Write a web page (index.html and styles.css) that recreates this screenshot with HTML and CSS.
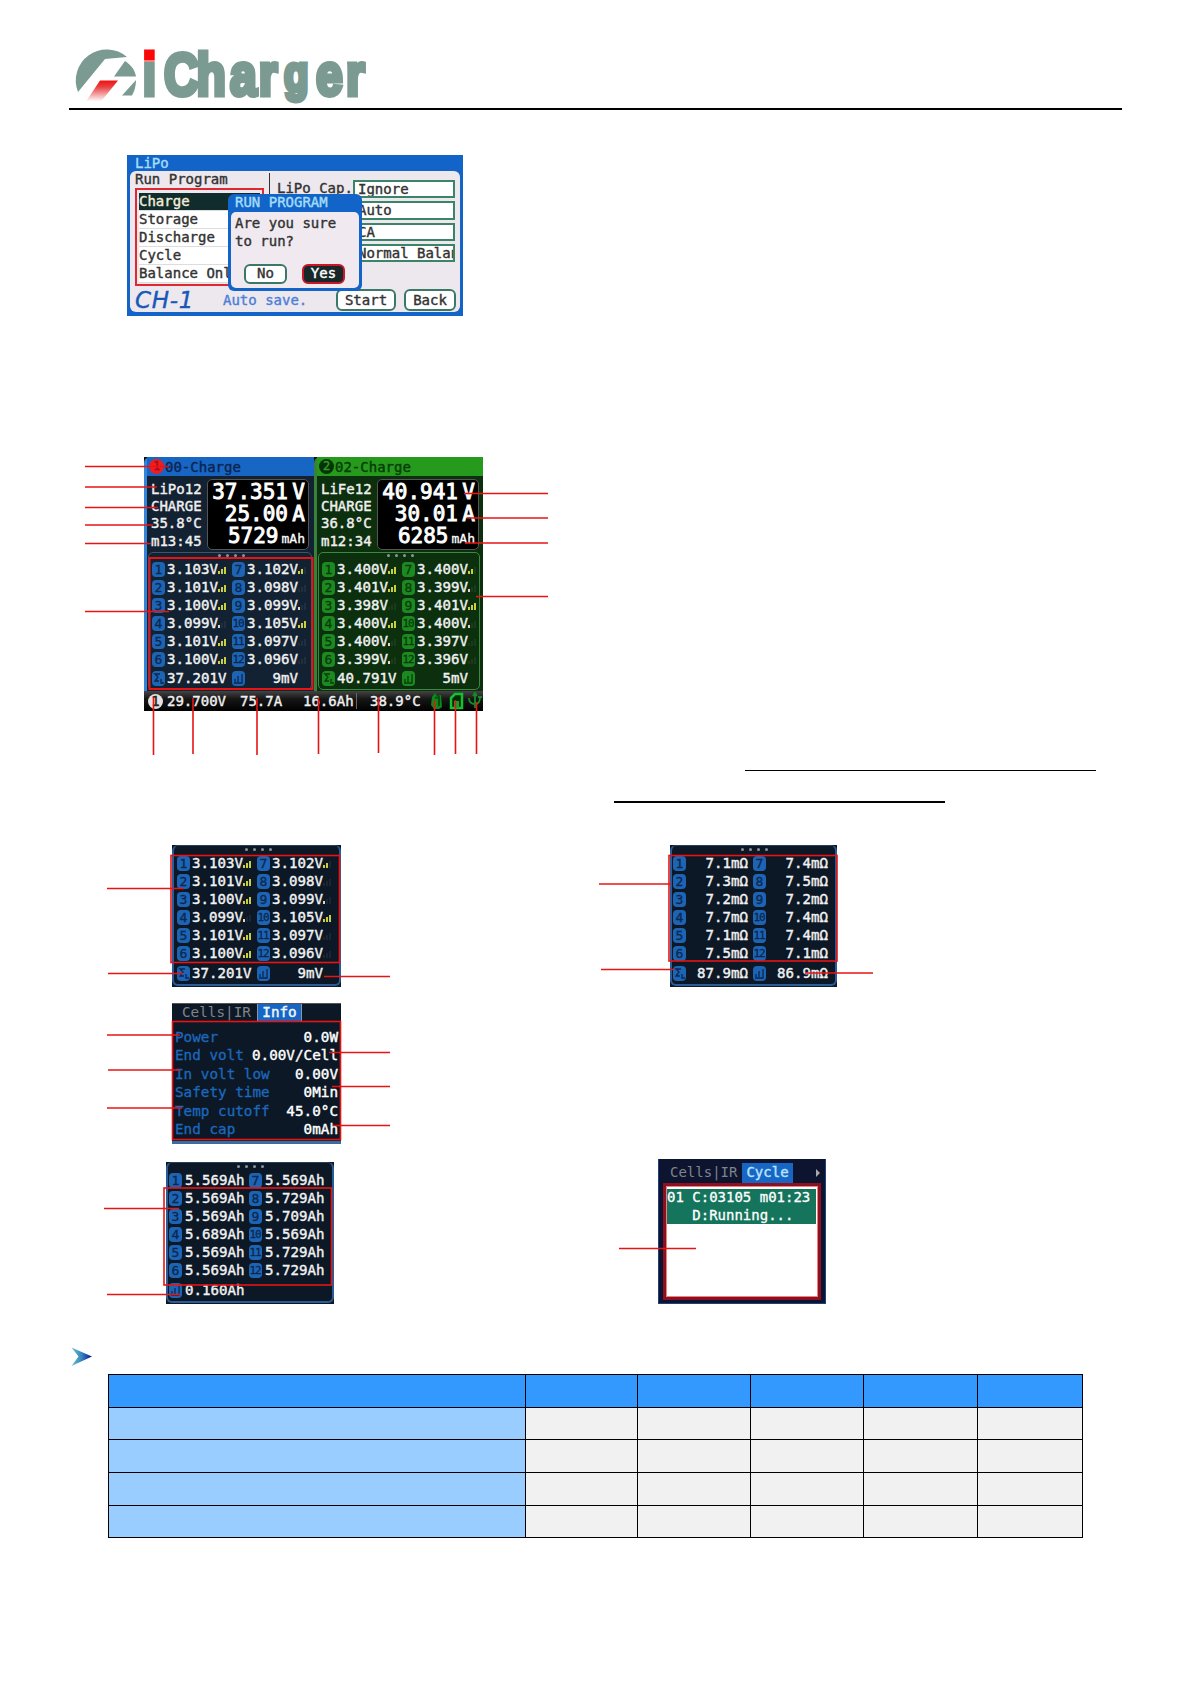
FILE: index.html
```
<!DOCTYPE html>
<html lang="en">
<head>
    <meta charset="UTF-8">
    <meta name="viewport" content="width=device-width, initial-scale=1.0">
    <title>iCharger Manual</title>
    <link rel="stylesheet" href="styles.css">
</head>
<body>
    <header class="page-header">
        <svg class="logo" width="300" height="58" viewBox="70 48 300 58">
            <defs>
                <linearGradient id="fade" x1="0" y1="0" x2="0" y2="1">
                    <stop offset="0" stop-color="#f01010"/>
                    <stop offset="0.3" stop-color="#e84040"/>
                    <stop offset="1" stop-color="#fff"/>
                </linearGradient>
                <linearGradient id="dot" gradientUnits="userSpaceOnUse" x1="0" y1="50" x2="0" y2="98">
                    <stop offset="0.24" stop-color="#f80808"/>
                    <stop offset="0.24" stop-color="#7b9a92"/>
                </linearGradient>
            </defs>
            <path d="M78 92A31 31 0 0 1 127 57L105 59Z" fill="#7b9a92"/>
            <path d="M125 61L114 76.500H136C135 70 131 65 125 61Z" fill="#7b9a92"/>
            <path d="M136 80L122 95.500H132C135 90 136 85 136 80Z" fill="#7b9a92"/>
            <path d="M100 80.500H118L101 101.500H86Z" fill="url(#fade)"/>
            <g class="logo-text" transform="scale(0.8 1)">
                <text x="178.500" y="95" fill="url(#dot)" stroke="url(#dot)">i</text>
                <text x="205 245.500 287.500 323.500" y="95">Char</text>
                <text class="logo-g" x="355" y="91">g</text>
                <text x="395 432.500" y="95">er</text>
            </g>
        </svg>
    </header>

    <main>
        <!-- run program confirmation -->
        <section class="screen run-screen">
            <div class="run-title">LiPo</div>
            <div class="run-body">
                <div class="run-columns">
                    <div class="program">
                        <div class="program-title">Run Program</div>
                        <ul class="program-list">
                            <li class="active">Charge</li>
                            <li>Storage</li>
                            <li>Discharge</li>
                            <li>Cycle</li>
                            <li>Balance Only</li>
                        </ul>
                    </div>
                    <div class="cap-label">LiPo Cap.</div>
                    <div class="fields">
                        <div class="field">Ignore</div>
                        <div class="field">Auto</div>
                        <div class="field">CA</div>
                        <div class="field">Normal Balan</div>
                    </div>
                </div>
                <div class="run-footer">
                    <span class="channel">CH-1</span>
                    <span class="autosave">Auto save.</span>
                    <span class="btn btn-start">Start</span>
                    <span class="btn btn-back">Back</span>
                </div>
            </div>
            <div class="dialog">
                <div class="dialog-title">RUN PROGRAM</div>
                <div class="dialog-body">
                    <div class="dialog-text">Are you sure<br>to run?</div>
                    <div class="dialog-buttons">
                        <span class="btn btn-no">No</span>
                        <span class="btn btn-yes">Yes</span>
                    </div>
                </div>
            </div>
        </section>

        <!-- dual channel screen -->
        <section class="screen dual-screen">
            <div class="channels">
                <div class="panel blue">
                    <div class="panel-head"><span class="num">1</span>00-Charge</div>
                    <div class="panel-top">
                        <div class="status">LiPo12<br>CHARGE<br>35.8°C<br>m13:45</div>
                        <div class="readout">
                            <div>37.351<b>V</b></div>
                            <div>25.00<b>A</b></div>
                            <div>5729<small>mAh</small></div>
                        </div>
                    </div>
                    <div class="cells framed" data-cells="volts"></div>
                </div>
                <div class="panel green">
                    <div class="panel-head"><span class="num">2</span>02-Charge</div>
                    <div class="panel-top">
                        <div class="status">LiFe12<br>CHARGE<br>36.8°C<br>m12:34</div>
                        <div class="readout">
                            <div>40.941<b>V</b></div>
                            <div>30.01<b>A</b></div>
                            <div>6285<small>mAh</small></div>
                        </div>
                    </div>
                    <div class="cells" data-cells="life"></div>
                </div>
            </div>
            <div class="input-bar">
                <span class="input-num">1</span>
                <span class="input-volt">29.700V</span>
                <span class="input-amp">75.7A</span>
                <span class="input-cap">16.6Ah</span>
                <span class="input-temp">38.9°C</span>
                <svg class="input-icons" width="54" height="18" viewBox="0 0 54 18">
                    <path d="M3 5L6 1L8 4L12 3L13 15L10 17H5L2 13Z" fill="#0b8a1c"/>
                    <path d="M6 6L10 5V14" fill="none" stroke="#04500c" stroke-width="2"/>
                    <path d="M22 6L26 2H33V16H22Z" fill="#032a06" stroke="#14c030" stroke-width="2.500"/>
                    <path d="M25 16V9H30V16" fill="#14a028"/>
                    <path d="M46 2V16M40 6C40 11 43 12 46 12C49 12 51 10 51 5M44 4L46 1L48 4M49 5H53" fill="none" stroke="#128c26" stroke-width="1.800"/>
                </svg>
            </div>
        </section>

        <div class="underlines">
            <div class="underline first"></div>
            <div class="underline second"></div>
        </div>

        <div class="screen-row cells-row">
            <section class="screen cells-screen blue">
                <div class="cells" data-cells="volts"></div>
            </section>
            <section class="screen cells-screen resistance blue">
                <div class="cells" data-cells="ohms"></div>
            </section>
        </div>

        <section class="screen info-screen">
            <div class="tabs"><span class="tab">Cells|IR</span><span class="tab selected">Info</span></div>
            <dl class="info-list">
                <div><dt>Power</dt><dd>0.0W</dd></div>
                <div><dt>End volt</dt><dd>0.00V/Cell</dd></div>
                <div><dt>In volt low</dt><dd>0.00V</dd></div>
                <div><dt>Safety time</dt><dd>0Min</dd></div>
                <div><dt>Temp cutoff</dt><dd>45.0°C</dd></div>
                <div><dt>End cap</dt><dd>0mAh</dd></div>
            </dl>
        </section>

        <div class="screen-row cycle-row">
            <section class="screen cells-screen capacity blue">
                <div class="cells" data-cells="caps"></div>
            </section>
            <section class="screen cycle-screen">
                <div class="tabs"><span class="tab">Cells|IR</span><span class="tab selected">Cycle</span><span class="more"></span></div>
                <div class="cycle-list">
                    <div class="cycle-item">01 C:03105 m01:23<br>   D:Running...</div>
                </div>
            </section>
        </div>

        <svg class="bullet" width="22" height="20" viewBox="0 0 22 20">
            <defs>
                <linearGradient id="arrow">
                    <stop offset="0" stop-color="#6cc4cc"/>
                    <stop offset="0.5" stop-color="#3484c0"/>
                    <stop offset="1" stop-color="#08108c"/>
                </linearGradient>
            </defs>
            <path d="M0.500 0.500L21 9.500L0.500 19L7.500 9.500Z" fill="url(#arrow)"/>
        </svg>

        <table class="spec">
            <colgroup><col class="c1"><col class="c2"><col class="c3"><col class="c4"><col class="c5"><col class="c6"></colgroup>
            <thead>
                <tr><th></th><th></th><th></th><th></th><th></th><th></th></tr>
            </thead>
            <tbody>
                <tr class="short"><td></td><td></td><td></td><td></td><td></td><td></td></tr>
                <tr><td></td><td></td><td></td><td></td><td></td><td></td></tr>
                <tr><td></td><td></td><td></td><td></td><td></td><td></td></tr>
                <tr class="short"><td></td><td></td><td></td><td></td><td></td><td></td></tr>
            </tbody>
        </table>
    </main>

    <!-- callout lines and frames over the screens -->
    <svg class="callouts" width="1191" height="1684" viewBox="0 0 1191 1684">
        <path d="M85 466.500H169M85 487H157M85 507.500H158M85 525H153M85 543.500H151M85 611.500H169"/>
        <path d="M464 493.500H548M467 518H548M465 543H548M476 596.500H548"/>
        <path d="M153.500 697V755M193 698V754M257 698V755M318.500 698V754M378.500 697V753M434.500 700V755M455.500 700V754M476.500 702V754"/>
        <path d="M107 888.500H184M108 973.500H183M324 976.500H390"/>
        <path d="M599 884H671M601 969.500H674M805 973H873"/>
        <path d="M107 1035H180M108 1070H180M107 1108H182M329 1052.500H390M332 1086.500H390M333 1125.500H390"/>
        <path d="M104 1208.500H179M107 1294.500H180M619 1248.500H696"/>
        <rect x="149.500" y="558" width="163" height="131" stroke-width="2"/>
        <rect x="171" y="855.500" width="168.500" height="107"/>
        <rect x="669" y="855.500" width="168" height="105.500"/>
        <rect x="172.500" y="1021.500" width="168" height="118"/>
        <rect x="164" y="1188" width="167.500" height="97"/>
    </svg>

    <script>
        // value, signal level (1-3, 0 = off)
        var data = {
            volts: {
                cells: [['3.103V', 3], ['3.102V', 2], ['3.101V', 3], ['3.098V', 0], ['3.100V', 3], ['3.099V', 1],
                        ['3.099V', 1], ['3.105V', 3], ['3.101V', 3], ['3.097V', 0], ['3.100V', 3], ['3.096V', 0]],
                total: ['37.201V', '9mV']
            },
            life: {
                cells: [['3.400V', 3], ['3.400V', 2], ['3.401V', 3], ['3.399V', 1], ['3.398V', 0], ['3.401V', 3],
                        ['3.400V', 3], ['3.400V', 1], ['3.400V', 1], ['3.397V', 0], ['3.399V', 1], ['3.396V', 0]],
                total: ['40.791V', '5mV']
            },
            ohms: {
                cells: [['7.1mΩ'], ['7.4mΩ'], ['7.3mΩ'], ['7.5mΩ'], ['7.2mΩ'], ['7.2mΩ'],
                        ['7.7mΩ'], ['7.4mΩ'], ['7.1mΩ'], ['7.4mΩ'], ['7.5mΩ'], ['7.1mΩ']],
                total: ['87.9mΩ', '86.9mΩ']
            },
            caps: {
                cells: [['5.569Ah'], ['5.569Ah'], ['5.569Ah'], ['5.729Ah'], ['5.569Ah'], ['5.709Ah'],
                        ['5.689Ah'], ['5.569Ah'], ['5.569Ah'], ['5.729Ah'], ['5.569Ah'], ['5.729Ah']],
                total: ['0.160Ah']
            }
        };

        function bars(level) {
            if (level === undefined) return '';
            var out = '<svg class="bars" width="9" height="9">';
            for (var i = 0; i < 3; i++) {
                var h = 3 + i * 2;
                var cls = i < level ? (level > 1 ? 'on' : 'low') : 'off';
                out += '<rect class="' + cls + '" x="' + i * 3 + '" y="' + (9 - h) + '" width="2" height="' + h + '"/>';
            }
            return out + '</svg>';
        }

        document.querySelectorAll('[data-cells]').forEach(function(el) {
            var d = data[el.dataset.cells];
            var html = '<div class="dots"><i></i><i></i><i></i><i></i></div><div class="cell-grid">';
            d.cells.forEach(function(c, i) {
                var n = i % 2 ? i / 2 + 6.5 : i / 2 + 1;
                html += '<span class="badge' + (n > 9 ? ' wide' : '') + '">' + n + '</span>';
                html += '<span class="value">' + c[0] + bars(c[1]) + '</span>';
            });
            html += '</div><div class="cell-grid total">';
            d.total.forEach(function(t, i) {
                var mark = i || d.total.length === 1 ? '<path d="M3 11V8M6 11V5M10 3V12H2"/>' : '<path d="M8 3H3L6 6L3 10H7M9 8V12H12"/>';
                html += '<svg class="badge" width="13" height="15">' + mark + '</svg><span class="value">' + t + '</span>';
            });
            el.innerHTML = html + '</div>';
        });
    </script>
</body>
</html>
```
FILE: styles.css
```
* {
    box-sizing: border-box;
}
body {
    position: relative;
    width: 1191px;
    height: 1684px;
    margin: 0;
    background: #fff;
    font-family: "DejaVu Sans Mono", "Liberation Mono", monospace;
    overflow: hidden;
}
main {
    display: flex;
    flex-direction: column;
    align-items: flex-start;
}
.page-header {
    height: 110px;
    margin: 0 69px 45px;
    padding: 48px 0 0 1px;
    border-bottom: 2px solid #000;
}
.logo {
    display: block;
    overflow: visible;
}
.logo-text {
    font-family: "Liberation Sans", Arial, sans-serif;
    font-weight: bold;
    font-size: 60px;
    fill: #7b9a92;
    stroke: #7b9a92;
    stroke-width: 5px;
}
.logo-g {
    font-size: 50px;
}
.screen {
    font-size: 14px;
    line-height: 18px;
    white-space: nowrap;
    overflow: hidden;
}

/* run program */
.run-screen {
    position: relative;
    width: 336px;
    height: 161px;
    margin-left: 127px;
    padding: 0 3px;
    background: #1264c8;
    color: #333;
    -webkit-text-stroke: 0.4px;
}
.run-title {
    height: 16px;
    padding-left: 5px;
    line-height: 16px;
    color: #a4dcfa;
}
.run-body {
    height: 141px;
    padding: 0 2px 0 5px;
    border-radius: 6px;
    background: #ede8ee;
}
.run-columns {
    display: flex;
    height: 118px;
}
.program {
    width: 134px;
}
.program-title {
    height: 17px;
    line-height: 16px;
}
.program-list {
    width: 129px;
    height: 98px;
    margin: 0;
    padding: 3px 2px;
    border: 2px solid #e02830;
    list-style: none;
    overflow: hidden;
}
.program-list li {
    height: 18px;
    line-height: 16px;
    background: #fff;
    border-bottom: 1px solid #ddd;
}
.program-list .active {
    background: #102c2c;
    color: #f4ecd8;
}
.cap-label {
    width: 84px;
    height: 100px;
    margin-top: 2px;
    padding: 6px 0 0 7px;
    border-left: 1px solid #333;
}
.fields {
    display: flex;
    flex-direction: column;
    gap: 3px;
    width: 102px;
    padding-top: 9px;
}
.field {
    height: 18.3px;
    padding-left: 3px;
    border: 2px solid #3c8468;
    background: #fff;
    line-height: 14px;
    overflow: hidden;
}
.run-footer {
    display: flex;
    align-items: center;
    height: 22px;
}
.channel {
    width: 88px;
    font-family: "DejaVu Sans", sans-serif;
    font-size: 23px;
    font-style: italic;
    letter-spacing: 0.7px;
    color: #1858b8;
}
.autosave {
    width: 113px;
    color: #4c80d8;
}
.btn {
    border: 2px solid #3c7868;
    border-radius: 6px;
    background: #fff;
    text-align: center;
}
.btn-start {
    width: 60px;
    height: 22px;
    margin-right: 8px;
}
.btn-back {
    width: 52px;
    height: 22px;
}
.dialog {
    position: absolute;
    left: 101px;
    top: 39px;
    width: 134px;
    height: 97px;
    padding: 0 3px;
    border-radius: 6px;
    background: #1264c8;
}
.dialog-title {
    height: 18px;
    padding-left: 4px;
    line-height: 16px;
    color: #a4dcfa;
}
.dialog-body {
    height: 76px;
    padding: 3px 4px;
    border-radius: 5px;
    background: #f0eaf0;
}
.dialog-text {
    line-height: 17.5px;
}
.dialog-buttons {
    display: flex;
    gap: 15px;
    padding: 14px 0 0 9px;
}
.dialog-buttons .btn {
    width: 43px;
    height: 20px;
    line-height: 15px;
}
.dialog-buttons .btn-yes {
    background: #182828;
    border-color: #c81828;
    color: #fff;
}

/* dual channel screen */
.dual-screen {
    width: 339px;
    height: 254px;
    margin: 141px 0 0 144px;
    background: #101010;
    color: #f0f0f0;
}
.channels {
    display: flex;
    height: 234px;
}
.panel {
    width: 170px;
    height: 234px;
    padding: 0 3px;
    border-radius: 6px 6px 0 0;
}
.panel.blue {
    background: #132233;
    border-left: 3px solid #3484d8;
    padding-left: 0;
}
.panel.green {
    width: 169px;
    background: #0c300e;
    border-left: 3px solid #38803c;
    padding-left: 0;
}
.panel-head {
    display: flex;
    align-items: center;
    gap: 1px;
    height: 19px;
    margin: 0 -3px 0 0;
    padding-left: 2px;
    background: #1866c4;
    color: #0a2450;
    -webkit-text-stroke: 0.4px;
}
.green .panel-head {
    background: #269a1c;
    color: #063c08;
}
.num {
    width: 15px;
    height: 15px;
    border-radius: 50%;
    background: #f01c20;
    color: #a01018;
    font-size: 12px;
    line-height: 15px;
    text-align: center;
}
.green .num {
    background: #063208;
    color: #2ca024;
}
.panel-top {
    display: flex;
    height: 76px;
}
.status {
    width: 60px;
    padding: 5px 0 0 4px;
    line-height: 17.2px;
    -webkit-text-stroke: 0.4px;
}
.readout {
    width: 102px;
    height: 71px;
    margin-top: 3px;
    padding: 1px 3px 0;
    border: 1px solid #555;
    border-radius: 5px;
    background: #000;
    color: #fff;
    font-size: 21px;
    line-height: 22px;
    text-align: right;
    -webkit-text-stroke: 0.9px;
}
.readout b {
    display: inline-block;
    width: 17px;
    font-weight: normal;
}
.readout small {
    margin-left: 3px;
    font-size: 13px;
    -webkit-text-stroke: 0.3px;
}
.panel .cells {
    height: 138px;
    margin: 0 -1px 0 1px;
    padding: 0 0 0 3px;
    border: 1px solid #3a556c;
    border-radius: 5px;
}
.panel.green .cells {
    border-color: #3c8a40;
    margin-right: 0;
}
.dots {
    display: flex;
    justify-content: center;
    gap: 5px;
    height: 7px;
    padding-top: 1px;
}
.dots i {
    width: 3px;
    height: 3px;
    border-radius: 50%;
    background: #90949c;
}
.cell-grid {
    display: grid;
    grid-template-columns: 15px 65px 15px 65px;
    grid-auto-rows: 18px;
    align-items: center;
}
.badge {
    width: 13px;
    height: 15px;
    border-radius: 4px;
    background: #1e64b4;
    color: #0a2850;
    font-size: 13px;
    line-height: 15px;
    text-align: center;
    -webkit-text-stroke: 0.3px;
}
.badge path {
    fill: none;
    stroke: #0a2850;
    stroke-width: 1.3px;
}
.badge.wide {
    font-size: 11px;
    letter-spacing: -1px;
    text-indent: -1px;
}
.green .badge {
    background: #1c8a20;
    color: #083c0a;
}
.green .badge path {
    stroke: #083c0a;
}
.value {
    display: flex;
    align-items: center;
    color: #f2f2f2;
    font-size: 14.1px;
    -webkit-text-stroke: 0.4px;
}
.bars .on {
    fill: #c8d040;
}
.bars .low {
    fill: #d8dcd0;
}
.bars .off {
    fill: #8888881f;
}
.total {
    margin-top: 1px;
}
.total .value:last-child:nth-child(4) {
    justify-content: flex-end;
    padding-right: 14px;
}
.input-bar {
    display: flex;
    align-items: center;
    height: 20px;
    padding-left: 4px;
    background: linear-gradient(#444, #161616 40%, #000);
    -webkit-text-stroke: 0.4px;
}
.input-num {
    width: 15px;
    height: 15px;
    margin-right: 4px;
    border-radius: 50%;
    background: #e8e0e0;
    color: #222;
    line-height: 15px;
    text-align: center;
}
.input-volt {
    width: 73px;
}
.input-amp {
    width: 63px;
}
.input-cap {
    width: 54px;
    border-right: 1px solid #666;
    line-height: 16px;
}
.input-temp {
    width: 72px;
    padding-left: 13px;
}

/* blank fill-in rules */
.underlines {
    width: 1191px;
    height: 134px;
    padding-top: 59px;
}
.underline {
    background: #000;
}
.underline.first {
    width: 351px;
    height: 1px;
    margin-left: 745px;
}
.underline.second {
    width: 331px;
    height: 2px;
    margin: 30px 0 0 614px;
}

/* small screens */
.screen-row {
    display: flex;
    align-items: flex-end;
}
.cells-row {
    gap: 329px;
    margin-left: 172px;
}
.cells-screen {
    width: 169px;
    height: 142px;
    background: #0c1826;
}
.cells-screen .cells {
    height: 141px;
    padding: 1px 0 0 3px;
    border: 2px solid #2a5c98;
    border-top: 1px solid #24415e;
    border-radius: 6px;
}
.cells-screen .total {
    margin-top: 2px;
}
.resistance {
    width: 167px;
}
.resistance .cells {
    padding-left: 1px;
}
.resistance .value {
    justify-content: flex-end;
    padding-right: 5px;
}
.resistance .total .value:last-child:nth-child(4) {
    padding-right: 5px;
}
.capacity {
    width: 168px;
}
.capacity .cells {
    padding-left: 1px;
}
.capacity .value {
    padding-left: 1px;
}
.tabs {
    display: flex;
    height: 18px;
    color: #808488;
    font-size: 14.3px;
}
.tab.selected {
    background: #1866c4;
    color: #f4f8ff;
    text-align: center;
    -webkit-text-stroke: 0.4px;
}
.info-screen {
    width: 169px;
    height: 141px;
    margin: 16px 0 0 172px;
    background: #0c1826;
    border-bottom: 3px solid #3a6ca4;
}
.info-screen .tabs {
    border-top: 1px solid #555;
    line-height: 17px;
}
.info-screen .tab {
    width: 85px;
    padding-left: 10px;
}
.info-screen .selected {
    width: 45px;
    padding: 0;
    border: 1px solid #8898a8;
    border-width: 0 1px;
}
.info-list {
    margin: 0;
    padding: 7px 3px 0;
    font-size: 14.3px;
    line-height: 18.4px;
}
.info-list div {
    display: flex;
    justify-content: space-between;
}
.info-list dt {
    color: #1c68bc;
    -webkit-text-stroke: 0.3px;
}
.info-list dd {
    margin: 0;
    color: #fff;
    -webkit-text-stroke: 0.4px;
}
.cycle-row {
    gap: 324px;
    margin: 15px 0 0 166px;
}
.cycle-screen {
    width: 168px;
    height: 145px;
    padding: 4px 4px 2px;
    background: #0c1430;
    border: 1px solid #1c4080;
    border-top: 0;
}
.cycle-screen .tabs {
    height: 20px;
    font-size: 14px;
    line-height: 19px;
}
.cycle-screen .tab {
    width: 79px;
    padding-left: 7px;
}
.cycle-screen .selected {
    width: 51px;
    padding: 0;
    color: #b8e4ff;
}
.more {
    width: 0;
    height: 0;
    margin: 6px 0 0 23px;
    border: 4px solid transparent;
    border-left-color: #aaa;
    border-right-width: 0;
}
.cycle-list {
    height: 117px;
    border: 4px solid #8c1020;
    outline: 1px solid #f08080;
    outline-offset: -4px;
    background: #fff;
    padding: 2px 1px 1px 0;
}
.cycle-item {
    height: 35px;
    background: #14745c;
    color: #fff;
    font-size: 14px;
    line-height: 17.5px;
    white-space: pre;
    -webkit-text-stroke: 0.3px;
}

.bullet {
    margin: 43px 0 0 71px;
}
.spec {
    width: 975px;
    margin: 7px 0 0 108px;
    border-collapse: collapse;
    table-layout: fixed;
}
.spec th,
.spec td {
    height: 33px;
    padding: 0;
    border: 1px solid #000;
    background: #f1f1f1;
}
.spec .short td {
    height: 32px;
}
.spec thead th {
    background: #3399ff;
}
.spec td:first-child {
    background: #99ccff;
}
.c1 {
    width: 417px;
}
.c2 {
    width: 112px;
}
.c3,
.c4 {
    width: 113px;
}
.c5 {
    width: 114px;
}
.c6 {
    width: 105px;
}
.callouts {
    position: absolute;
    left: 0;
    top: 0;
    fill: none;
    stroke: #e81414;
    stroke-width: 1.6px;
}
```
